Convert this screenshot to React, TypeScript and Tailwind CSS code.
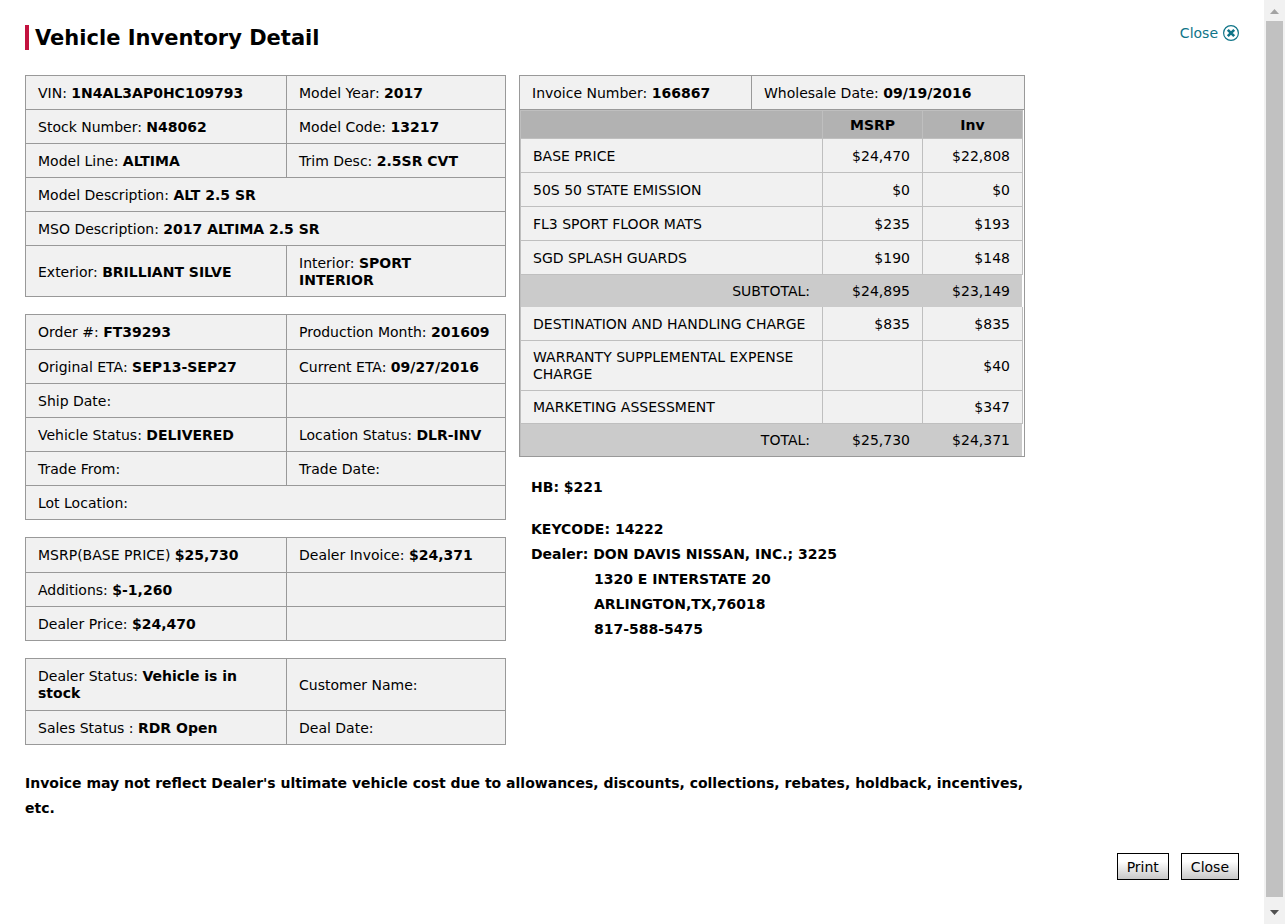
import type { ReactNode } from "react";

type Field = { label: string; value?: ReactNode };
type FieldRow = Field[];

const vehicle: FieldRow[] = [
  [{ label: "VIN:", value: "1N4AL3AP0HC109793" }, { label: "Model Year:", value: "2017" }],
  [{ label: "Stock Number:", value: "N48062" }, { label: "Model Code:", value: "13217" }],
  [{ label: "Model Line:", value: "ALTIMA" }, { label: "Trim Desc:", value: "2.5SR CVT" }],
  [{ label: "Model Description:", value: "ALT 2.5 SR" }],
  [{ label: "MSO Description:", value: "2017 ALTIMA 2.5 SR" }],
  [
    { label: "Exterior:", value: "BRILLIANT SILVE" },
    { label: "Interior:", value: <>SPORT<br />INTERIOR</> },
  ],
];

const order: FieldRow[] = [
  [{ label: "Order #:", value: "FT39293" }, { label: "Production Month:", value: "201609" }],
  [{ label: "Original ETA:", value: "SEP13-SEP27" }, { label: "Current ETA:", value: "09/27/2016" }],
  [{ label: "Ship Date:" }, { label: "" }],
  [{ label: "Vehicle Status:", value: "DELIVERED" }, { label: "Location Status:", value: "DLR-INV" }],
  [{ label: "Trade From:" }, { label: "Trade Date:" }],
  [{ label: "Lot Location:" }],
];

const pricing: FieldRow[] = [
  [{ label: "MSRP(BASE PRICE)", value: "$25,730" }, { label: "Dealer Invoice:", value: "$24,371" }],
  [{ label: "Additions:", value: "$-1,260" }, { label: "" }],
  [{ label: "Dealer Price:", value: "$24,470" }, { label: "" }],
];

const status: FieldRow[] = [
  [
    { label: "Dealer Status:", value: <>Vehicle is in<br />stock</> },
    { label: "Customer Name:" },
  ],
  [{ label: "Sales Status :", value: "RDR Open" }, { label: "Deal Date:" }],
];

type Line = { kind: "item" | "total"; name: ReactNode; msrp: string; inv: string };

const lines: Line[] = [
  { kind: "item", name: "BASE PRICE", msrp: "$24,470", inv: "$22,808" },
  { kind: "item", name: "50S 50 STATE EMISSION", msrp: "$0", inv: "$0" },
  { kind: "item", name: "FL3 SPORT FLOOR MATS", msrp: "$235", inv: "$193" },
  { kind: "item", name: "SGD SPLASH GUARDS", msrp: "$190", inv: "$148" },
  { kind: "total", name: "SUBTOTAL:", msrp: "$24,895", inv: "$23,149" },
  { kind: "item", name: "DESTINATION AND HANDLING CHARGE", msrp: "$835", inv: "$835" },
  { kind: "item", name: <>WARRANTY SUPPLEMENTAL EXPENSE<br />CHARGE</>, msrp: "", inv: "$40" },
  { kind: "item", name: "MARKETING ASSESSMENT", msrp: "", inv: "$347" },
  { kind: "total", name: "TOTAL:", msrp: "$25,730", inv: "$24,371" },
];

function FieldTable({ rows, roomy = false }: { rows: FieldRow[]; roomy?: boolean }) {
  return (
    <table className="w-full table-fixed border-collapse bg-[#f1f1f1]">
      <colgroup>
        <col className="w-[261px]" />
        <col />
      </colgroup>
      <tbody>
        {rows.map((row, r) => (
          <tr key={r}>
            {row.map((field, c) => (
              <td
                key={c}
                colSpan={row.length === 1 ? 2 : 1}
                className={`border border-[#999] px-3 pt-[9px] align-middle whitespace-nowrap ${roomy && r === 0 ? "pb-2" : "pb-[7px]"}`}
              >
                {field.label || "\u00a0"} {field.value && <b>{field.value}</b>}
              </td>
            ))}
          </tr>
        ))}
      </tbody>
    </table>
  );
}

function InvoiceTable() {
  return (
    <div className="border border-[#999]">
      <div className="flex border-b border-[#999] bg-[#f1f1f1]">
        <div className="w-[232px] border-r border-[#999] px-3 pt-[9px] pb-[7px]">
          Invoice Number: <b>166867</b>
        </div>
        <div className="flex-1 px-3 pt-[9px] pb-[7px]">
          Wholesale Date: <b>09/19/2016</b>
        </div>
      </div>
      <div className="pr-px">
        <table className="w-full table-fixed border-separate border-spacing-0 border-l border-[#bfbfbf]">
          <colgroup>
            <col />
            <col className="w-[100px]" />
            <col className="w-[100px]" />
          </colgroup>
          <thead>
            <tr className="bg-[#b2b2b2]">
              <td className="border-y border-r border-[#bfbfbf]" />
              <th className="border-y border-r border-[#bfbfbf] pt-1.5 pb-1">MSRP</th>
              <th className="border-y border-r border-[#bfbfbf] pt-1.5 pb-1">Inv</th>
            </tr>
          </thead>
          <tbody>
            {lines.map((line, i) => {
              if (line.kind === "total") {
                return (
                  <tr key={i} className="bg-[#cbcbcb] text-right">
                    <td className="pt-2 pr-[13px] pb-[7px] pl-3">{line.name}</td>
                    <td className="pt-2 pr-[13px] pb-[7px] pl-3">{line.msrp}</td>
                    <td className="border-r border-white px-3 pt-2 pb-[7px]">{line.inv}</td>
                  </tr>
                );
              }
              const padding = i > 5 ? "pt-2 pb-[7px]" : "pt-[9px] pb-[7px]";
              return (
                <tr key={i} className="bg-[#f1f1f1]">
                  <td className={`border-r border-b border-[#bfbfbf] px-3 whitespace-nowrap ${padding}`}>
                    {line.name}
                  </td>
                  <td className={`border-r border-b border-[#bfbfbf] px-3 text-right ${padding}`}>{line.msrp}</td>
                  <td className={`border-r border-b border-[#bfbfbf] px-3 text-right ${padding}`}>{line.inv}</td>
                </tr>
              );
            })}
          </tbody>
        </table>
      </div>
    </div>
  );
}

function ScrollBar() {
  return (
    <div aria-hidden="true" className="flex w-[21px] shrink-0 flex-col items-center bg-[#f1f1f1]">
      <svg width="21" height="21" viewBox="0 0 21 21" className="shrink-0">
        <path d="M6 14 L10.5 9 L15 14 Z" fill="#a3a3a3" />
      </svg>
      <div className="w-[17px] flex-1 bg-[#c1c1c1]" />
      <svg width="21" height="27" viewBox="0 0 21 27" className="shrink-0">
        <path d="M6 13 L10.5 18 L15 13 Z" fill="#505050" />
      </svg>
    </div>
  );
}

const buttonStyle =
  "border border-black bg-linear-to-b from-white from-30% to-[#c8c8c8] px-[9px] pt-1 pb-[3px] leading-[18px]";

export default function App() {
  return (
    <div className="flex min-h-screen bg-white font-['Verdana','DejaVu_Sans',sans-serif] text-[14px] leading-[17px] text-black">
      <main className="min-w-0 flex-1 p-[25px]">
        <header className="flex items-start justify-between">
          <h1 className="border-l-4 border-[#c3123f] pt-px pl-1.5 text-[21px] leading-[24px] font-bold">
            Vehicle Inventory Detail
          </h1>
          <a href="#close" className="flex items-start gap-[5px] text-[#0f7488]">
            Close
            <svg width="16" height="16" viewBox="0 0 16 16" fill="none" stroke="currentColor">
              <circle cx="8" cy="8" r="7.4" strokeWidth="1.2" />
              <path d="M4.8 4.8 L11.2 11.2 M11.2 4.8 L4.8 11.2" strokeWidth="2.6" />
            </svg>
          </a>
        </header>

        <div className="mt-[25px] flex max-w-[1000px] items-start gap-[13px]">
          <div className="flex w-[481px] shrink-0 flex-col gap-[17px]">
            <FieldTable rows={vehicle} />
            <FieldTable rows={order} roomy />
            <FieldTable rows={pricing} roomy />
            <FieldTable rows={status} roomy />
          </div>
          <div className="min-w-0 flex-1">
            <InvoiceTable />
            <div className="px-3 pt-[18px] leading-[25px] font-bold">
              <p>HB: $221</p>
              <p className="mt-[17px]">KEYCODE: 14222</p>
              <p>Dealer: DON DAVIS NISSAN, INC.; 3225</p>
              <address className="pl-[63px] not-italic">
                1320 E INTERSTATE 20
                <br />
                ARLINGTON,TX,76018
                <br />
                817-588-5475
              </address>
            </div>
          </div>
        </div>

        <p className="mt-[26px] max-w-[1000px] leading-[25px] font-bold">
          Invoice may not reflect Dealer's ultimate vehicle cost due to allowances, discounts, collections, rebates,
          holdback, incentives, etc.
        </p>

        <div className="mt-8 flex justify-end gap-3">
          <button type="button" className={buttonStyle}>
            Print
          </button>
          <button type="button" className={buttonStyle}>
            Close
          </button>
        </div>
      </main>
      <ScrollBar />
    </div>
  );
}
